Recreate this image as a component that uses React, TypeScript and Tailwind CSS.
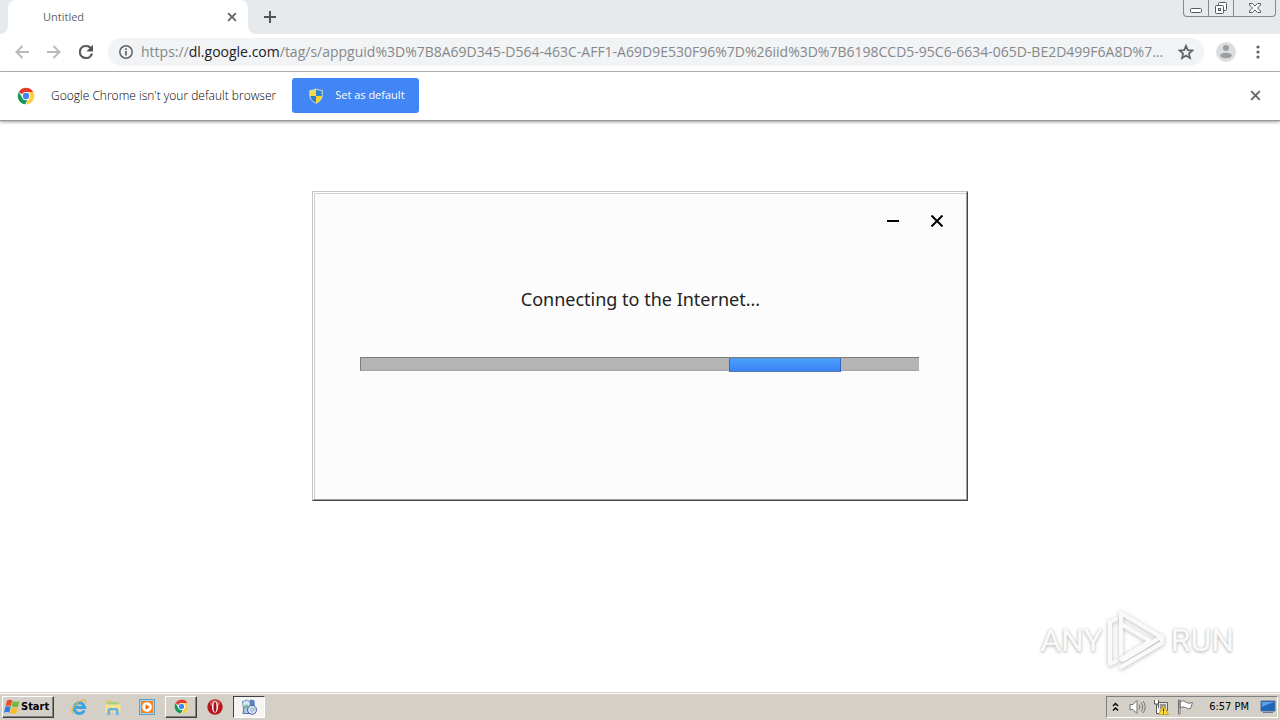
import { useState } from 'react';
import type { ReactNode } from 'react';

const UI_FONT = "font-['Open_Sans','Noto_Sans',sans-serif]";

function ChromeLogo({ className }: { className: string }) {
  return (
    <svg viewBox="0 0 48 48" className={className} aria-hidden="true">
      <circle cx="24" cy="24" r="22" fill="#fff" />
      <path d="M24 2a22 22 0 0 1 19.1 11H24a11 11 0 0 0-10.3 7.2L5 13A22 22 0 0 1 24 2z" fill="#e33b2e" />
      <path d="M43.1 13A22 22 0 0 1 24 46l9.500-16.500A11 11 0 0 0 32 16.500L24 13z" fill="#fbcf3f" />
      <path d="M4.900 13l9.600 16.500A11 11 0 0 0 28 34.500L22 46A22 22 0 0 1 4.900 13z" fill="#159a57" />
      <circle cx="24" cy="24" r="10.500" fill="#fff" />
      <circle cx="24" cy="24" r="8.500" fill="#4285f4" />
    </svg>
  );
}

function Cross({ className, width = 2 }: { className: string; width?: number }) {
  return (
    <svg viewBox="0 0 14 14" className={className} fill="none" stroke="currentColor" strokeWidth={width} aria-hidden="true">
      <path d="M1.500 1.500l11 11M12.500 1.500l-11 11" />
    </svg>
  );
}

function TabStrip() {
  return (
    <header className="flex h-[34px] items-start bg-[#e6eaed] text-[#5f6368]">
      <div className="h-[34px] w-2 shrink-0 bg-white">
        <div className="h-full rounded-br-lg bg-[#e6eaed]" />
      </div>
      <div className="flex h-[34px] w-60 items-center rounded-t-lg bg-white pr-[11px] pl-[35px]">
        <span className="flex-1 text-[11px]">Untitled</span>
        <button type="button" aria-label="Close tab">
          <Cross className="h-[10px] w-[10px]" width={2.5} />
        </button>
      </div>
      <div className="h-[34px] w-2 shrink-0 bg-white">
        <div className="h-full rounded-bl-lg bg-[#e6eaed]" />
      </div>
      <button type="button" aria-label="New tab" className="mt-[11px] ml-2">
        <svg viewBox="0 0 12 12" className="h-3 w-3" stroke="#50555a" strokeWidth="2" aria-hidden="true">
          <path d="M6 0v12M0 6h12" />
        </svg>
      </button>
      <div className="mr-1 ml-auto flex h-[17px] rounded-b border border-t-0 border-[#85898d] text-[#56595c]">
        <button type="button" aria-label="Minimize window" className="flex w-[25px] justify-center border-r border-[#85898d]">
          <svg viewBox="0 0 12 16" className="h-4 w-3" fill="#fff" stroke="currentColor" aria-hidden="true">
            <rect x=".5" y="8.500" width="11" height="4" rx="1" />
          </svg>
        </button>
        <button type="button" aria-label="Restore window" className="flex w-[25px] justify-center border-r border-[#85898d]">
          <svg viewBox="0 0 14 16" className="h-4 w-[14px]" fill="#fff" stroke="currentColor" aria-hidden="true">
            <rect x="4.500" y="2.500" width="8" height="8" rx="1" />
            <rect x="1.500" y="5.500" width="8" height="8" rx="1" />
            <rect x="4.500" y="8.500" width="2" height="2" />
          </svg>
        </button>
        <button type="button" aria-label="Close window" className="flex w-[41px] justify-center">
          <svg viewBox="0 0 12 16" className="h-4 w-3" fill="#fff" stroke="currentColor" aria-hidden="true">
            <path d="M.5 3.500h3l2.500 2.500 2.500-2.500h3v1.500l-3 3 3 3v1.500h-3l-2.500-2.500-2.500 2.500h-3v-1.500l3-3-3-3z" />
          </svg>
        </button>
      </div>
    </header>
  );
}

function Toolbar() {
  const [path, setPath] = useState(
    '/tag/s/appguid%3D%7B8A69D345-D564-463C-AFF1-A69D9E530F96%7D%26iid%3D%7B6198CCD5-95C6-6634-065D-BE2D499F6A8D%7...'
  );

  return (
    <nav className="flex h-[38px] items-center border-b border-[#aeb0b3] pr-5 pb-[1px] pl-[15px] text-[#5f6368]">
      <button type="button" aria-label="Back" className="text-[#bababa]">
        <svg viewBox="0 0 14 14" className="h-[14px] w-[14px]" fill="none" stroke="currentColor" strokeWidth="2" aria-hidden="true">
          <path d="M14 7H1.500M7.500 1L1.500 7l6 6" />
        </svg>
      </button>
      <button type="button" aria-label="Forward" className="ml-[18px] text-[#bababa]">
        <svg viewBox="0 0 14 14" className="h-[14px] w-[14px]" fill="none" stroke="currentColor" strokeWidth="2" aria-hidden="true">
          <path d="M0 7h12.500M6.500 1l6 6-6 6" />
        </svg>
      </button>
      <button type="button" aria-label="Reload" className="ml-[18px] text-[#505357]">
        <svg viewBox="4 4 16 16" className="h-[14px] w-[14px]" fill="currentColor" stroke="currentColor" strokeWidth=".5" aria-hidden="true">
          <path d="M17.650 6.350A7.950 7.950 0 0 0 12 4a8 8 0 1 0 7.730 10h-2.080A6 6 0 1 1 12 6c1.660 0 3.140.690 4.220 1.780L13 11h7V4l-2.350 2.350z" />
        </svg>
      </button>
      <div className="ml-[15px] flex h-7 min-w-0 flex-1 items-center rounded-full bg-[#f1f3f4] pr-[10px] pl-[11px]">
        <button type="button" aria-label="Site information">
          <svg viewBox="0 0 14 14" className="h-[14px] w-[14px]" fill="none" stroke="currentColor" aria-hidden="true">
            <circle cx="7" cy="7" r="6.200" strokeWidth="1.500" />
            <path d="M7 6v4.500M7 3.300v1.600" strokeWidth="1.700" />
          </svg>
        </button>
        <label htmlFor="address" className="ml-2 text-sm text-[#85888c]">
          https://<span className="text-[#202124]">dl.google.com</span>
        </label>
        <input
          id="address"
          value={path}
          onChange={(e) => setPath(e.target.value)}
          className="min-w-0 flex-1 bg-transparent text-sm text-[#85888c] outline-none"
        />
        <button type="button" aria-label="Bookmark this page" className="ml-3">
          <svg viewBox="0 0 16 16" className="h-4 w-4" fill="none" stroke="currentColor" strokeWidth="1.700" aria-hidden="true">
            <path d="M8 1.800l1.800 4.300 4.600.4-3.500 3 1.100 4.600L8 11.600l-4 2.500 1.100-4.600-3.500-3 4.600-.4z" />
          </svg>
        </button>
      </div>
      <button type="button" aria-label="Profile" className="ml-3">
        <svg viewBox="0 0 20 20" className="h-5 w-5" aria-hidden="true">
          <circle cx="10" cy="10" r="10" fill="#dcdddf" />
          <circle cx="10" cy="6" r="3" fill="#9b9da0" />
          <ellipse cx="10" cy="13.500" rx="5.800" ry="2.800" fill="#9b9da0" />
        </svg>
      </button>
      <button type="button" aria-label="Menu" className="ml-5">
        <svg viewBox="0 0 4 14" className="h-[14px] w-1" fill="currentColor" aria-hidden="true">
          <circle cx="2" cy="2" r="1.600" />
          <circle cx="2" cy="7" r="1.600" />
          <circle cx="2" cy="12" r="1.600" />
        </svg>
      </button>
    </nav>
  );
}

function InfoBar() {
  return (
    <div className="z-10 flex h-[49px] items-center border-b border-[#999] pr-[19px] pb-[1px] pl-[17px] shadow-[0_1px_3px_#999]">
      <ChromeLogo className="h-[18px] w-[18px]" />
      <p className="ml-4 text-xs font-light text-black">Google Chrome isn't your default browser</p>
      <button type="button" className="ml-4 flex h-[35px] w-[127px] items-center rounded-[3px] bg-[#4285f4] pl-4 text-[11px] text-white">
        <svg viewBox="0 0 16 16" className="mr-[11px] h-4 w-4" aria-hidden="true">
          <path d="M8 .8Q5 2.500 1.800 2.500v5Q2 12.500 8 15.500z" fill="#2c7fd0" />
          <path d="M8 .8q3 1.700 6.200 1.700v5Q14 12.500 8 15.500z" fill="#f5d328" />
          <path d="M8 .8Q5 2.500 1.800 2.500V8H8z" fill="#f5d94a" />
          <path d="M8 .8q3 1.700 6.200 1.700V8H8z" fill="#2b83cf" />
          <path d="M8 1Q5 2.500 1.800 2.500v5Q2 12.500 8 15.300q6-2.800 6.200-7.800v-5Q11 2.500 8 1z" fill="none" stroke="#d9dcc4" />
        </svg>
        Set as default
      </button>
      <button type="button" aria-label="Dismiss" className="ml-auto text-[#66696c]">
        <Cross className="h-[11px] w-[11px]" width={2.5} />
      </button>
    </div>
  );
}

function InstallerDialog() {
  return (
    <section
      aria-label="Installer"
      className="w-full max-w-[656px] border border-t-[#c6c6c6] border-r-[#444] border-b-[#444] border-l-[#c6c6c6]"
    >
      <div className="border border-t-white border-r-[#a0a0a0] border-b-[#a0a0a0] border-l-white">
        <div className="border-t border-l border-[#cfcfcf] bg-[#fcfcfc] pb-32">
          <div className="flex items-center justify-end gap-8 pt-[21px] pr-[23px] text-black">
            <button type="button" aria-label="Minimize" className="flex h-3 w-3 items-center">
              <span className="h-[2px] w-full bg-black" />
            </button>
            <button type="button" aria-label="Close">
              <svg viewBox="0 0 12 12" className="h-3 w-3" stroke="currentColor" strokeWidth="2" aria-hidden="true">
                <path d="M.5.5l11 11M11.500.5l-11 11" />
              </svg>
            </button>
          </div>
          <p className="mt-[58px] text-center font-['Noto_Sans',sans-serif] text-lg leading-7 text-[#222]">
            Connecting to the Internet...
          </p>
          <div
            role="progressbar"
            aria-label="Connecting"
            className="mt-[44px] mr-[47px] ml-[45px] h-[14px] border-t border-b border-l border-t-[#7c7c7c] border-b-[#a4a4a4] border-l-[#7c7c7c] bg-[#b4b4b4]"
          >
            <div className="ml-[66%] h-[14px] w-[20%] border border-t-[#5390cf] border-r-[#2d65bd] border-b-[#527bad] border-l-[#2d6fd0] bg-linear-to-b from-[#4ba0ff] to-[#3c82f3]" />
          </div>
        </div>
      </div>
    </section>
  );
}

function Watermark() {
  return (
    <div className="absolute right-[46px] bottom-[21px] flex items-center gap-1 font-['Roboto',sans-serif] text-[32px] text-[#fafafa] [text-shadow:0_0_3px_#bdbdbd,0_2px_3px_#d4d4d4]">
      <span>ANY</span>
      <svg
        viewBox="0 0 60 62"
        className="h-[62px] w-[60px] drop-shadow-[0_1px_2px_#bbb]"
        fill="none"
        stroke="#fafafa"
        strokeWidth="4"
        strokeLinejoin="round"
        strokeLinecap="round"
        aria-hidden="true"
      >
        <path d="M14 45V4l40 24-38 23" />
        <path d="M14 15l29 17-29 18" />
        <path d="M9 10l-6 3v42l6-3M14 58l41-24v-7" />
      </svg>
      <span>RUN</span>
    </div>
  );
}

function TaskButton({ label, pressed, children }: { label: string; pressed?: boolean; children: ReactNode }) {
  return (
    <button
      type="button"
      aria-label={label}
      className={
        'flex h-[22px] w-8 items-center justify-center border ' +
        (pressed
          ? 'border-t-[#404040] border-r-white border-b-white border-l-[#404040] bg-[#f5f4f1]'
          : 'border-t-white border-r-[#404040] border-b-[#404040] border-l-white shadow-[inset_-1px_-1px_#808080]')
      }
    >
      {children}
    </button>
  );
}

function Taskbar() {
  return (
    <footer className="flex h-7 items-center border-t border-[#d4d0c8] bg-[#d4d0c8] pr-[2px] pl-[2px] shadow-[inset_0_1px_#fff]">
      <button
        type="button"
        className="flex h-[22px] w-[52px] items-center border border-t-white border-r-[#404040] border-b-[#404040] border-l-white pl-[1px] font-['DejaVu_Sans_Condensed','DejaVu_Sans',sans-serif] text-[11px] font-bold text-black shadow-[inset_-1px_-1px_#808080]"
      >
        <svg viewBox="0 0 16 16" className="h-4 w-4 shrink-0" aria-hidden="true">
          <path d="M3 1.500q3-1.500 5.300 0L6.900 7.300q-2.700-1.400-5.400 0z" fill="#e8502b" />
          <path d="M8.900 2q2.800 1.500 6.600 0l-1.500 5.800q-3.500 1.200-6.300-.2z" fill="#75b843" />
          <path d="M1.300 8q2.700-1.400 5.400 0L5.300 13.800q-2.700-1.400-5.300 0z" fill="#3180d5" />
          <path d="M7.500 8.400q2.700 1.400 6.300 0L12.300 14.200q-3.500 1.200-6.300-.2z" fill="#f8bd25" />
        </svg>
        <span className="ml-[1px] pt-[2px]">Start</span>
      </button>
      <div className="ml-[17px] flex items-center gap-[18px]">
        <button type="button" aria-label="Internet Explorer">
          <svg viewBox="0 0 16 16" className="h-4 w-4" fill="none" aria-hidden="true">
            <path d="M13.300 11.300a5.300 5.300 0 1 1 .4-2.800H4" stroke="#3aa5e3" strokeWidth="3" />
            <path d="M1.500 14.500C-1 11 6 2.500 12 1.200c3-.6 3.300 1.300 2.300 3.200" stroke="#e4b43c" strokeWidth="1.200" />
          </svg>
        </button>
        <button type="button" aria-label="Windows Explorer">
          <svg viewBox="0 0 16 16" className="h-4 w-4" aria-hidden="true">
            <path d="M1 1.500h6l1 1.500h7v10H1z" fill="#e7c86c" />
            <path d="M3 3.500h10v4H3z" fill="#94cf9b" />
            <path d="M.5 5.500h15V13H.5z" fill="#f6e294" />
            <path d="M2.500 16v-4.500q0-2.500 2.500-2.500h6q2.500 0 2.500 2.500V16H11v-4.500H5V16z" fill="#62b3e3" />
          </svg>
        </button>
        <button type="button" aria-label="Media Player">
          <svg viewBox="0 0 16 16" className="h-4 w-4" aria-hidden="true">
            <rect x=".5" y=".5" width="15" height="15" fill="#a9d3ee" stroke="#5a9fce" />
            <rect x="2" y="2" width="12" height="12" fill="#f4841c" />
            <circle cx="8" cy="8" r="4.800" fill="#fff" />
            <path d="M6.500 5.200l4.500 2.800-4.500 2.800z" fill="#ee7013" />
          </svg>
        </button>
      </div>
      <div className="ml-[10px] flex items-center gap-[10px]">
        <TaskButton label="Google Chrome">
          <ChromeLogo className="h-[15px] w-[15px]" />
        </TaskButton>
        <button type="button" aria-label="Opera">
          <svg viewBox="0 0 16 16" className="h-4 w-4" aria-hidden="true">
            <circle cx="8" cy="8" r="7.700" fill="#b8181d" />
            <ellipse cx="8" cy="4.500" rx="5" ry="3.500" fill="#d35b58" />
            <ellipse cx="8" cy="8" rx="3" ry="5.700" fill="#fff" />
            <ellipse cx="8" cy="8" rx="1.500" ry="5" fill="#a80f17" />
          </svg>
        </button>
        <TaskButton label="Installer" pressed>
          <svg viewBox="0 0 16 16" className="h-4 w-4" aria-hidden="true">
            <path d="M1.500 2.500l5-1.500 3 3-1 5-6 1z" fill="#d5eaf5" stroke="#6d8fb8" />
            <path d="M9 1l4 .5.500 5-4-.5z" fill="#5588cf" stroke="#42639f" strokeWidth=".6" />
            <path d="M3 8h6v6.500H2z" fill="#a9c5ea" stroke="#5673a8" />
            <circle cx="5.500" cy="7.500" r="2" fill="#78bf86" />
            <circle cx="11" cy="10.800" r="4.500" fill="#cfdcf3" stroke="#4f5fab" />
            <path d="M11 10.800l3-3a4.200 4.200 0 0 1 1 3z" fill="#9fd7bf" />
            <circle cx="11" cy="10.800" r="1.300" fill="#fff" stroke="#5b72ae" strokeWidth=".6" />
          </svg>
        </TaskButton>
      </div>
      <div className="ml-auto flex h-[22px] items-center border border-t-[#808080] border-r-white border-b-white border-l-[#808080] pr-[1px] pl-[5px]">
        <button type="button" aria-label="Show hidden icons">
          <svg viewBox="0 0 7 10" className="h-[10px] w-[7px]" fill="none" stroke="#000" strokeWidth="1.400" aria-hidden="true">
            <path d="M1 4l2.500-2.500L6 4M1 8.500L3.500 6 6 8.500" />
          </svg>
        </button>
        <button type="button" aria-label="Volume" className="ml-[10px]">
          <svg viewBox="0 0 17 16" className="h-4 w-[17px]" fill="none" stroke="#757575" aria-hidden="true">
            <path d="M1 5.500h3l4-4v13l-4-4H1z" fill="#fff" />
            <path d="M10 5.500q2 2.500 0 5M12 3.500q3.500 4.500 0 9M14 2q4.500 6 0 12" />
          </svg>
        </button>
        <button type="button" aria-label="Network" className="ml-[7px]">
          <svg viewBox="0 0 16 16" className="h-4 w-4" aria-hidden="true">
            <path d="M5.500 3.500h9v8h-9z" fill="#e8e8e8" stroke="#606060" />
            <path d="M7 5h6v5H7z" fill="#999" />
            <path d="M1.500 1v4h4V1M3.500 5v9.500H8" fill="#fff" stroke="#555" />
            <path d="M10.500 6.500l5 9h-10z" fill="#ffd83b" stroke="#b99516" strokeWidth=".7" />
            <path d="M10.500 9.500v3M10.500 13.500v1" stroke="#222" />
          </svg>
        </button>
        <button type="button" aria-label="Action Center" className="ml-2">
          <svg viewBox="0 0 16 16" className="h-4 w-4" fill="#fff" stroke="#707070" aria-hidden="true">
            <path d="M1.500 1h1.500v14H1.500zM3 2.500q4-2 6.500 1 2.500 1.500 6 0l-2 6q-3 1-5-1Q6 7 3 9z" />
          </svg>
        </button>
        <time className="ml-4 pt-[2px] font-['DejaVu_Sans_Condensed','DejaVu_Sans',sans-serif] text-[11px] text-black">6:57 PM</time>
        <button type="button" aria-label="Show desktop" className="ml-[11px]">
          <svg viewBox="0 0 16 14" className="h-[14px] w-4" aria-hidden="true">
            <path d="M1 1h14v10H1z" fill="#1f65b9" stroke="#4a739f" />
            <path d="M2 2h12L2 7z" fill="#5b9ee1" />
            <path d="M3 12h10v1H3z" fill="#687b91" />
          </svg>
        </button>
      </div>
    </footer>
  );
}

export default function App() {
  return (
    <div className={`flex min-h-screen flex-col bg-white ${UI_FONT}`}>
      <TabStrip />
      <Toolbar />
      <InfoBar />
      <main className="relative flex flex-1 items-start justify-center pt-[70px]">
        <InstallerDialog />
        <Watermark />
      </main>
      <Taskbar />
    </div>
  );
}
